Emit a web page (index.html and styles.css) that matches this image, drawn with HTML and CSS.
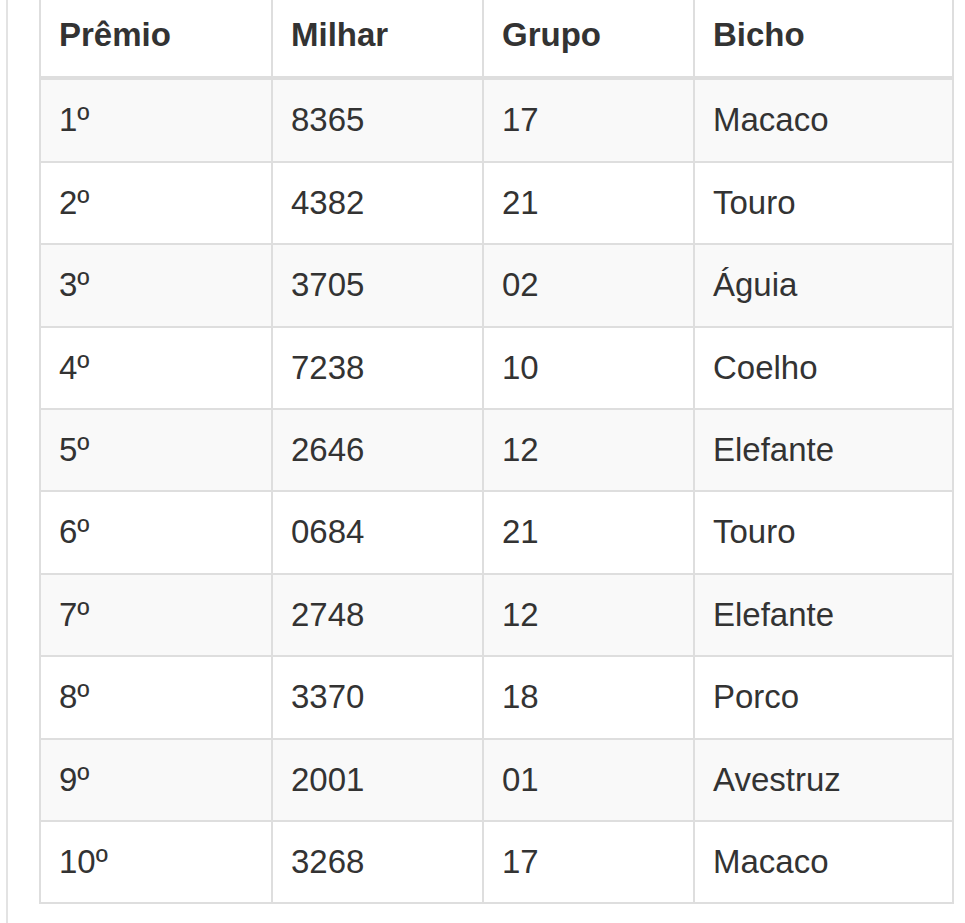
FILE: index.html
```html
<!DOCTYPE html>
<html lang="pt-BR">
<head>
<meta charset="utf-8">
<title>Resultado</title>
<link rel="stylesheet" href="styles.css">
</head>
<body>
<div class="page">
  <table class="results">
    <colgroup>
      <col class="c1"><col class="c2"><col class="c3"><col class="c4">
    </colgroup>
    <thead>
      <tr><th>Prêmio</th><th>Milhar</th><th>Grupo</th><th>Bicho</th></tr>
    </thead>
    <tbody>
      <tr><td>1º</td><td>8365</td><td>17</td><td>Macaco</td></tr>
      <tr><td>2º</td><td>4382</td><td>21</td><td>Touro</td></tr>
      <tr><td>3º</td><td>3705</td><td>02</td><td>Águia</td></tr>
      <tr><td>4º</td><td>7238</td><td>10</td><td>Coelho</td></tr>
      <tr><td>5º</td><td>2646</td><td>12</td><td>Elefante</td></tr>
      <tr><td>6º</td><td>0684</td><td>21</td><td>Touro</td></tr>
      <tr><td>7º</td><td>2748</td><td>12</td><td>Elefante</td></tr>
      <tr><td>8º</td><td>3370</td><td>18</td><td>Porco</td></tr>
      <tr><td>9º</td><td>2001</td><td>01</td><td>Avestruz</td></tr>
      <tr><td>10º</td><td>3268</td><td>17</td><td>Macaco</td></tr>
    </tbody>
  </table>
</div>
</body>
</html>
```
FILE: styles.css
```css
html, body {
  margin: 0;
  padding: 0;
  background: #ffffff;
}
body {
  font-family: "Liberation Sans", Arial, sans-serif;
  color: #333333;
  overflow: hidden;
}
.page {
  margin-left: 6px;
  border-left: 2px solid #e3e3e3;
  min-height: 100vh;
  padding-left: 31px;
  padding-top: 1px;
}
.results {
  margin-top: -6px;
  width: 915px;
  table-layout: fixed;
  border-collapse: separate;
  border-spacing: 0;
  font-size: 33px;
}
.c1 { width: 232px; }
.c2 { width: 211px; }
.c3 { width: 211px; }
.c4 { width: 261px; }
.results th,
.results td {
  text-align: left;
  padding: 18px 10px 18px 18px;
  line-height: 44.4px;
  border-left: 2px solid #dedede;
  white-space: nowrap;
}
.results th:last-child,
.results td:last-child {
  border-right: 2px solid #dedede;
}
.results th {
  font-weight: bold;
  padding-top: 16px;
  padding-bottom: 19px;
  border-top: 2px solid #dedede;
  border-bottom: 4px solid #dedede;
}
.results tbody tr + tr td {
  border-top: 2px solid #dedede;
}
.results tbody tr:last-child td {
  border-bottom: 2px solid #dedede;
}
.results tbody tr:nth-child(odd) td {
  background: #f9f9f9;
}
```
